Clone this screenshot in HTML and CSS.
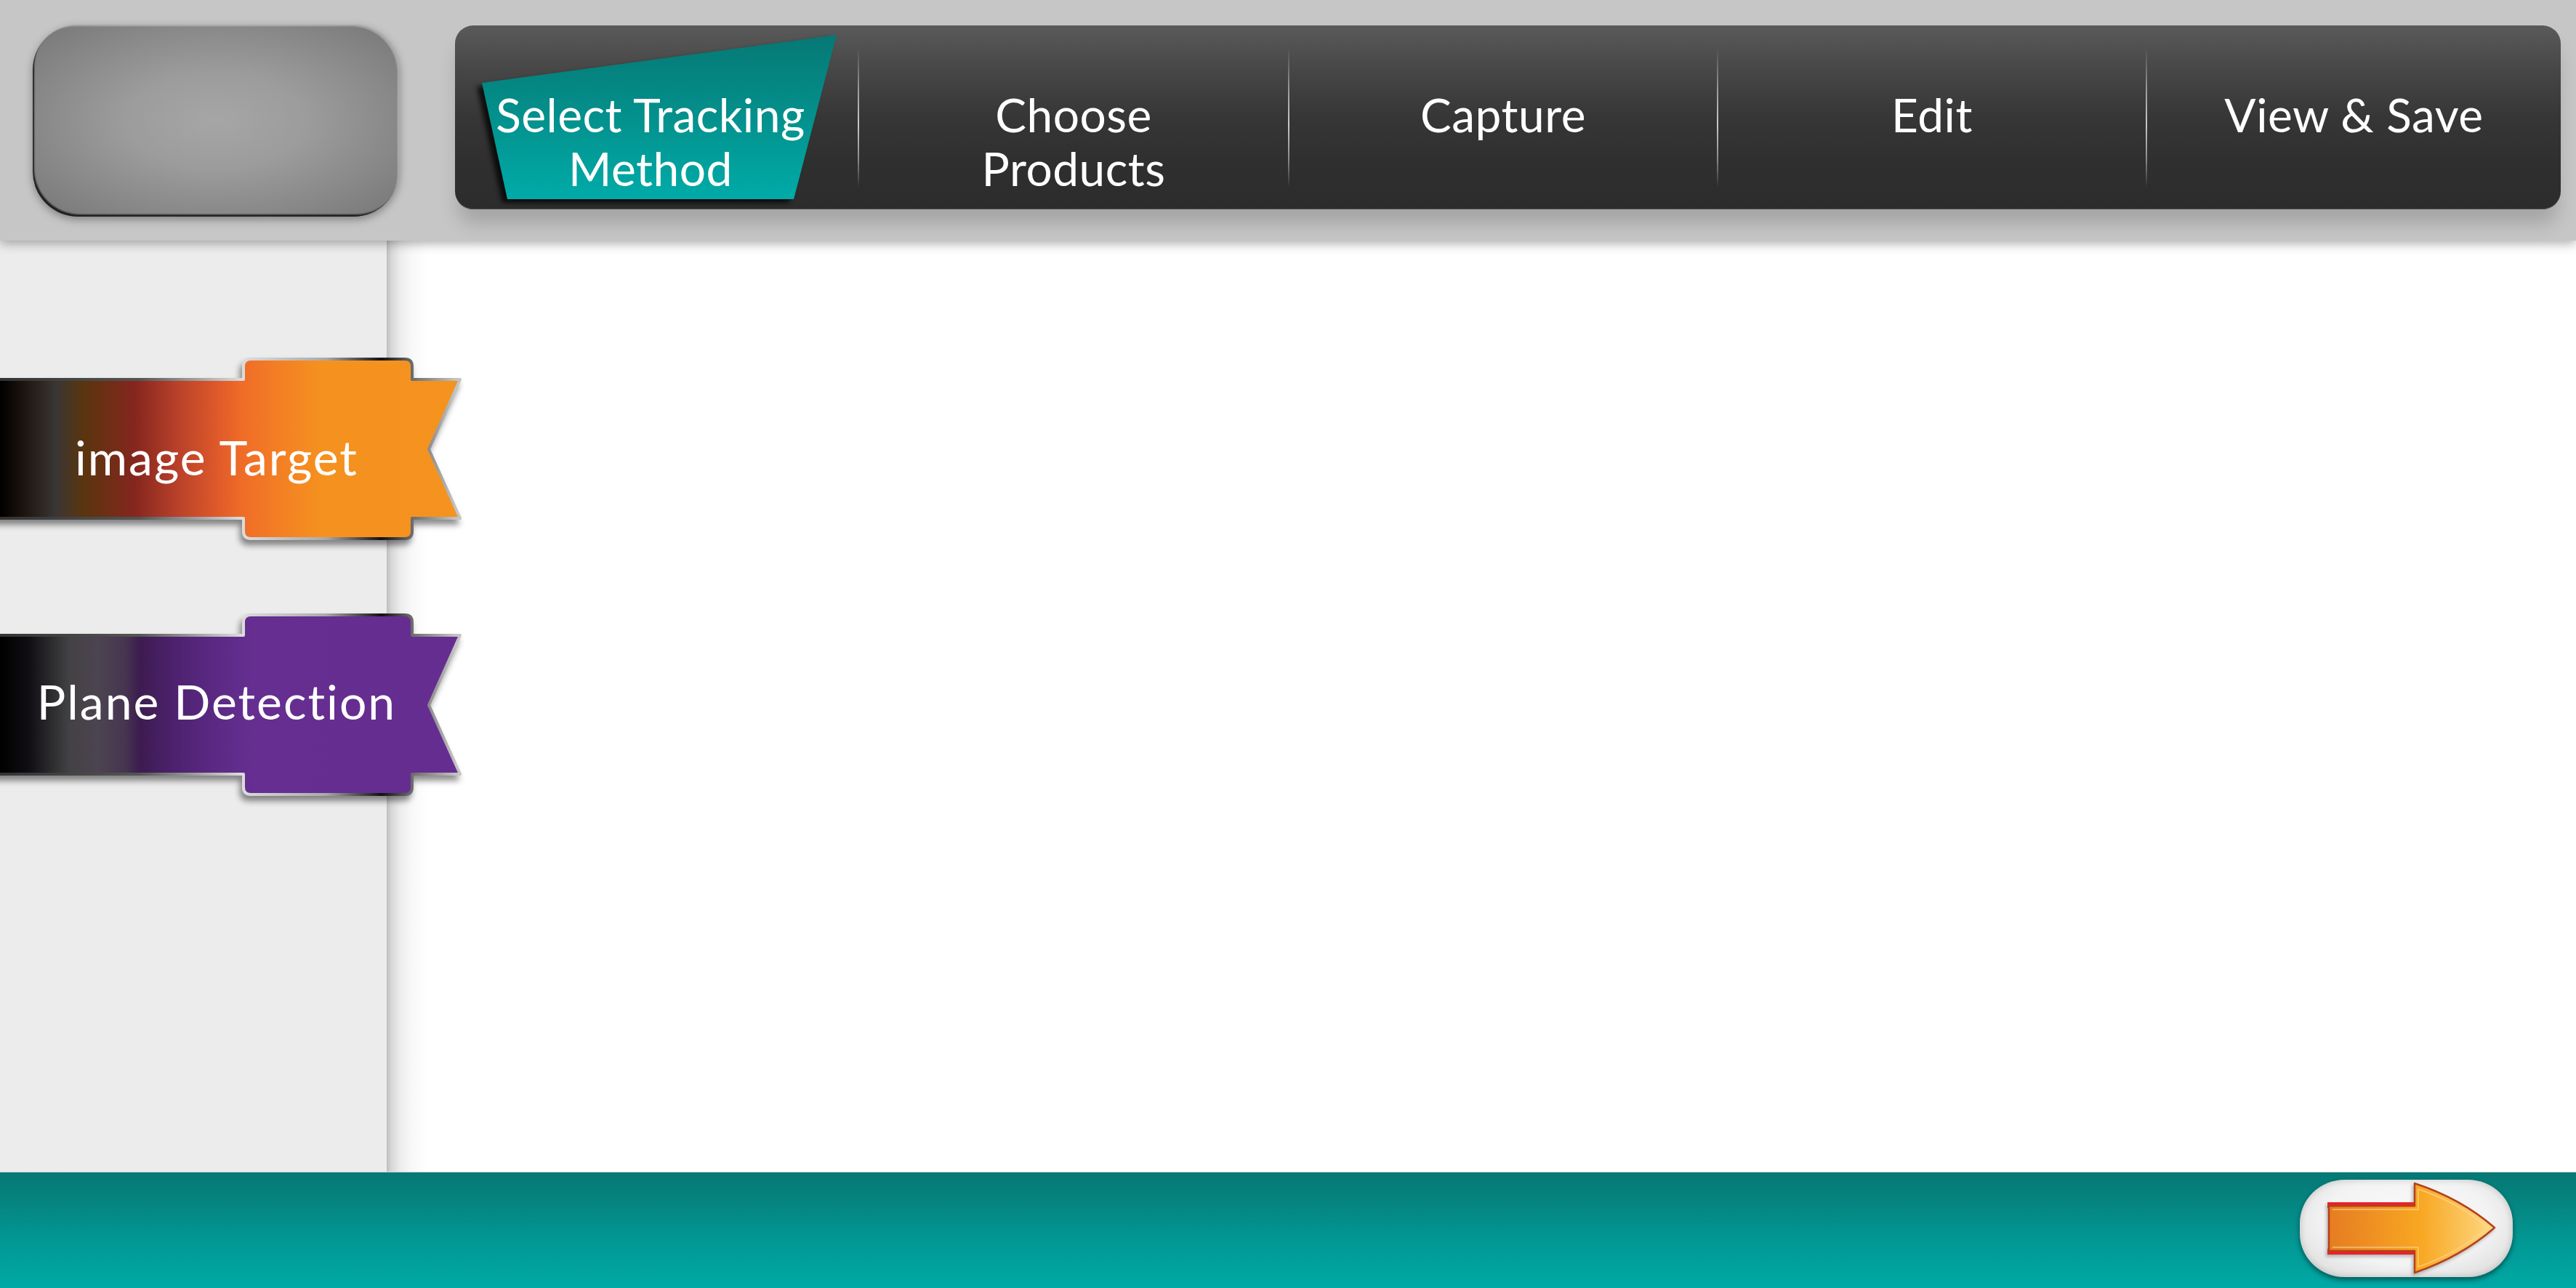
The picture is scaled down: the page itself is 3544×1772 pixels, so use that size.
FILE: index.html
```html
<!DOCTYPE html>
<html lang="en">
<head>
<meta charset="utf-8">
<title>Select Tracking Method</title>
<link rel="stylesheet" href="styles.css">
</head>
<body>
<div class="app">
  <header class="header">
    <div class="logo-btn"></div>
    <nav class="steps">
      <div class="step step--active">
        <svg class="step-bg" viewBox="0 0 554 253" width="554" height="253" aria-hidden="true">
          <defs>
            <linearGradient id="tealGrad" x1="0" y1="0" x2="0" y2="1">
              <stop offset="0" stop-color="#067874"/>
              <stop offset="0.45" stop-color="#048e8a"/>
              <stop offset="1" stop-color="#00aba8"/>
            </linearGradient>
          </defs>
          <polygon points="37,79 525,13 466,239 72,239" fill="url(#tealGrad)"/>
        </svg>
        <span class="step-label">Select Tracking<br>Method</span>
      </div>
      <span class="sep"></span>
      <div class="step"><span class="step-label">Choose<br>Products</span></div>
      <span class="sep"></span>
      <div class="step"><span class="step-label">Capture</span></div>
      <span class="sep"></span>
      <div class="step"><span class="step-label">Edit</span></div>
      <span class="sep"></span>
      <div class="step"><span class="step-label">View &amp; Save</span></div>
    </nav>
  </header>

  <div class="body">
    <aside class="sidebar">
      <div class="ribbon ribbon--orange">
        <svg class="ribbon-shape" viewBox="0 0 640 256" width="640" height="256" aria-hidden="true">
          <defs>
            <linearGradient id="orangeFill" gradientUnits="userSpaceOnUse" x1="0" y1="0" x2="640" y2="0">
              <stop offset="0" stop-color="#000000"/>
              <stop offset="0.05" stop-color="#1c140e"/>
              <stop offset="0.12" stop-color="#3a3634"/>
              <stop offset="0.18" stop-color="#5a350e"/>
              <stop offset="0.29" stop-color="#85261e"/>
              <stop offset="0.38" stop-color="#b8402a"/>
              <stop offset="0.47" stop-color="#e05a2a"/>
              <stop offset="0.52" stop-color="#ef6c28"/>
              <stop offset="0.60" stop-color="#f37f24"/>
              <stop offset="0.69" stop-color="#f5911f"/>
              <stop offset="1" stop-color="#f5931f"/>
            </linearGradient>
            <linearGradient id="orangeStroke" gradientUnits="userSpaceOnUse" x1="0" y1="0" x2="640" y2="0">
              <stop offset="0" stop-color="#333"/>
              <stop offset="0.3" stop-color="#555"/>
              <stop offset="0.52" stop-color="#dcdcdc"/>
              <stop offset="0.7" stop-color="#aaa"/>
              <stop offset="0.82" stop-color="#111"/>
              <stop offset="0.88" stop-color="#666"/>
              <stop offset="0.98" stop-color="#c4c4c4"/>
            </linearGradient>
          </defs>
          <path d="M-10,32 H335 V14 Q335,4 345,4 H557 Q567,4 567,14 V32 H633 L590,128 L633,223 H567 V241 Q567,251 557,251 H345 Q335,251 335,241 V223 H-10 Z" fill="url(#orangeFill)" stroke="url(#orangeStroke)" stroke-width="4" stroke-linejoin="round"/>
        </svg>
        <span class="ribbon-label">image Target</span>
      </div>

      <div class="ribbon ribbon--purple">
        <svg class="ribbon-shape" viewBox="0 0 640 256" width="640" height="256" aria-hidden="true">
          <defs>
            <linearGradient id="purpleFill" gradientUnits="userSpaceOnUse" x1="0" y1="0" x2="640" y2="0">
              <stop offset="0" stop-color="#000000"/>
              <stop offset="0.06" stop-color="#0f0d12"/>
              <stop offset="0.15" stop-color="#434244"/>
              <stop offset="0.21" stop-color="#4c4450"/>
              <stop offset="0.27" stop-color="#463550"/>
              <stop offset="0.30" stop-color="#3d1c50"/>
              <stop offset="0.38" stop-color="#4e2270"/>
              <stop offset="0.47" stop-color="#5c2a85"/>
              <stop offset="0.54" stop-color="#652e90"/>
              <stop offset="1" stop-color="#662d91"/>
            </linearGradient>
            <linearGradient id="purpleStroke" gradientUnits="userSpaceOnUse" x1="0" y1="0" x2="640" y2="0">
              <stop offset="0" stop-color="#333"/>
              <stop offset="0.3" stop-color="#555"/>
              <stop offset="0.52" stop-color="#dcdcdc"/>
              <stop offset="0.7" stop-color="#aaa"/>
              <stop offset="0.82" stop-color="#111"/>
              <stop offset="0.88" stop-color="#666"/>
              <stop offset="0.98" stop-color="#c4c4c4"/>
            </linearGradient>
          </defs>
          <path d="M-10,32 H335 V14 Q335,4 345,4 H557 Q567,4 567,14 V32 H633 L590,128 L633,223 H567 V241 Q567,251 557,251 H345 Q335,251 335,241 V223 H-10 Z" fill="url(#purpleFill)" stroke="url(#purpleStroke)" stroke-width="4" stroke-linejoin="round"/>
        </svg>
        <span class="ribbon-label">Plane Detection</span>
      </div>
    </aside>
    <main class="canvas"></main>
  </div>

  <footer class="footer">
    <button class="next-btn" type="button" aria-label="Next">
      <svg class="next-arrow" viewBox="0 0 293 134" width="293" height="134" aria-hidden="true">
        <defs>
          <linearGradient id="arrowFill" gradientUnits="userSpaceOnUse" x1="40" y1="0" x2="268" y2="0">
            <stop offset="0" stop-color="#e67c22"/>
            <stop offset="0.55" stop-color="#f8a722"/>
            <stop offset="1" stop-color="#fdd985"/>
          </linearGradient>
        </defs>
        <rect x="38" y="31" width="124" height="8" fill="#e8232a"/>
        <rect x="38" y="95" width="124" height="8" fill="#e8232a"/>
        <path d="M40,36 H158 V5 Q222,26 268,66 Q222,106 158,128 V98 H40 Z" fill="url(#arrowFill)" stroke="#b4401c" stroke-width="2.5" stroke-linejoin="round"/>
        <path d="M45,41 H163 V13 Q220,32 258,66 Q220,100 163,120 V93 H45" fill="none" stroke="#ffd999" stroke-opacity="0.7" stroke-width="1.5"/>
      </svg>
    </button>
  </footer>
</div>
</body>
</html>
```

FILE: styles.css
```css
* { box-sizing: border-box; }

html, body {
  margin: 0;
  padding: 0;
  width: 100%;
  height: 100%;
  overflow: hidden;
}

body {
  font-family: "Lato", "Liberation Sans", sans-serif;
  background: #ffffff;
}

.app {
  display: grid;
  grid-template-rows: 331px 1fr 160px;
  height: 100vh;
}

/* ---------- header ---------- */
.header {
  position: relative;
  z-index: 3;
  display: flex;
  align-items: flex-start;
  gap: 77px;
  padding: 34px 21px 0 45px;
  background: #c6c6c6;
  box-shadow: 0 4px 14px rgba(0, 0, 0, 0.32);
}

.logo-btn {
  flex: 0 0 504px;
  height: 264px;
  border-radius: 62px;
  background: radial-gradient(ellipse at 50% 50%, #a6a6a6 0%, #9c9c9c 35%, #888 70%, #767676 100%);
  box-shadow:
    0 4px 12px rgba(0, 0, 0, 0.35),
    inset 3px -4px 2px -1px rgba(0, 0, 0, 0.75),
    inset -4px 4px 2px -2px rgba(255, 255, 255, 0.35);
}

.steps {
  flex: 1;
  height: 253px;
  margin-top: 1px;
  display: grid;
  grid-template-columns: 554px 2px 590px 2px 588px 2px 588px 2px 1fr;
  border-radius: 25px;
  background: linear-gradient(to bottom, #5a5a5a 0%, #464646 25%, #363636 50%, #2f2f2f 75%, #2c2c2c 100%);
  box-shadow: 0 24px 26px -4px rgba(0, 0, 0, 0.17), inset 0 -1px 0 #4a4a4a;
}

.step {
  position: relative;
  display: flex;
  justify-content: center;
  align-items: flex-start;
  padding-top: 86px;
}

.step--active {
  padding-right: 16px;
}

.step-bg {
  position: absolute;
  left: 0;
  top: 0;
  filter: drop-shadow(-7px 5px 3px rgba(0, 0, 0, 0.75));
}

.step-label {
  position: relative;
  color: #ffffff;
  font-size: 64px;
  line-height: 74px;
  text-align: center;
  letter-spacing: 0.5px;
  white-space: nowrap;
}

.sep {
  align-self: center;
  height: 193px;
  width: 2px;
  background: linear-gradient(to bottom, rgba(180,180,180,0) 0%, #9a9a9a 30%, #c8c8c8 55%, #8a8a8a 80%, rgba(180,180,180,0) 100%);
}

/* ---------- body ---------- */
.body {
  display: flex;
  min-height: 0;
}

.sidebar {
  position: relative;
  z-index: 2;
  flex: 0 0 532px;
  width: 532px;
  min-width: 0;
  display: flex;
  flex-direction: column;
  align-items: flex-start;
  gap: 96px;
  padding-top: 159px;
  background: #ececec;
}

.ribbon {
  position: relative;
  width: 640px;
  min-width: 640px;
  height: 256px;
  flex: 0 0 256px;
}

.ribbon-shape {
  position: absolute;
  left: 0;
  top: 0;
  overflow: visible;
  filter: drop-shadow(-3px 7px 4px rgba(0, 0, 0, 0.45));
}

.ribbon-label {
  position: relative;
  display: block;
  width: 596px;
  text-align: center;
  color: #ffffff;
  font-size: 66px;
  line-height: 66px;
  letter-spacing: 2px;
  white-space: nowrap;
}

.ribbon--orange .ribbon-label { padding-top: 106px; }
.ribbon--purple .ribbon-label { padding-top: 90px; }

.canvas {
  flex: 1;
  min-width: 0;
  background: linear-gradient(to right, #bdbdbd 0px, #d6d6d6 6px, #ececec 18px, #f8f8f8 34px, #ffffff 55px);
}

/* ---------- footer ---------- */
.footer {
  display: flex;
  justify-content: flex-end;
  align-items: flex-start;
  padding: 10px 87px 0 0;
  border-top: 1px solid #cfd4d4;
  background: linear-gradient(to bottom, #057874 0%, #058480 25%, #029894 60%, #00a9a6 100%);
}

.next-btn {
  position: relative;
  width: 293px;
  height: 134px;
  padding: 0;
  border: none;
  border-radius: 62px / 60px;
  background: radial-gradient(ellipse at 50% 42%, #fafafa 0%, #f3f3f3 55%, #e2e2e2 80%, #c9c9c9 100%);
  box-shadow:
    0 4px 7px rgba(0, 0, 0, 0.45),
    inset 0 0 10px rgba(0, 0, 0, 0.18);
  cursor: pointer;
}

.next-arrow {
  position: absolute;
  left: 0;
  top: 0;
  filter: drop-shadow(-2px 3px 2px rgba(0, 0, 0, 0.25));
}
```
